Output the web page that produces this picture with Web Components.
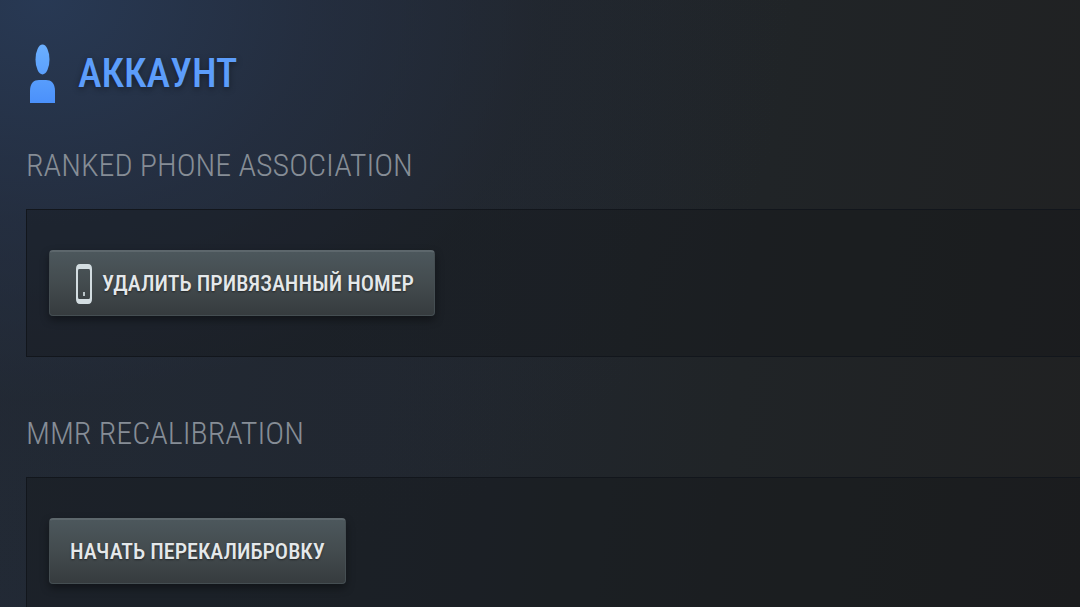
<!DOCTYPE html>
<html lang="ru">
<head>
<meta charset="UTF-8">
<meta name="viewport" content="width=device-width, initial-scale=1.0">
<title>Аккаунт</title>
<style>
    body {
        margin: 0;
        background: #202325;
        color: #e4e8ea;
        font-family: "Roboto Condensed", "Liberation Sans Narrow", Roboto, sans-serif;
    }
</style>
</head>
<body>
<settings-page>
    <page-heading slot="heading">АККАУНТ</page-heading>
    <settings-section>
        <span slot="title">RANKED PHONE ASSOCIATION</span>
        <panel-button icon="phone">УДАЛИТЬ ПРИВЯЗАННЫЙ НОМЕР</panel-button>
    </settings-section>
    <settings-section>
        <span slot="title">MMR RECALIBRATION</span>
        <panel-button>НАЧАТЬ ПЕРЕКАЛИБРОВКУ</panel-button>
    </settings-section>
</settings-page>

<script>
class SettingsPage extends HTMLElement {
    constructor() {
        super();
        this.attachShadow({ mode: 'open' });
    }

    connectedCallback() {
        // The pane scrolls by itself, the background stays in place
        this.shadowRoot.innerHTML = `
            <style>
                :host {
                    display: block;
                    box-sizing: border-box;
                    height: 100vh;
                    overflow-y: auto;
                    scrollbar-width: none;
                    padding: 44px 0 40px 26px;
                    background:
                        radial-gradient(ellipse 70% 100% at 4% 0%, #283954 0%, rgba(37,48,68,0.7) 36%, rgba(34,40,50,0.4) 66%, rgba(32,35,37,0) 100%),
                        linear-gradient(98deg, #222a36 0%, #212730 38%, #202427 68%, #202122 100%);
                }

                main {
                    display: flex;
                    flex-direction: column;
                    gap: 52px;
                    margin-top: 37px;
                }
            </style>
            <slot name="heading"></slot>
            <main><slot></slot></main>
        `;
    }
}

class PageHeading extends HTMLElement {
    constructor() {
        super();
        this.attachShadow({ mode: 'open' });
    }

    connectedCallback() {
        this.shadowRoot.innerHTML = `
            <style>
                :host {
                    display: flex;
                    align-items: center;
                    gap: 20px;
                    height: 60px;
                    color: #5c9dfb;
                }

                svg {
                    width: 32px;
                    height: 60px;
                }

                h1 {
                    margin: 0;
                    font-size: 40px;
                    line-height: 48px;
                    font-weight: 500;
                    text-shadow: 0 2px 6px rgba(0,0,0,0.4);
                }
            </style>
            <svg viewBox="0 0 32 60" aria-hidden="true">
                <defs>
                    <linearGradient id="fill" gradientUnits="userSpaceOnUse" x1="0" y1="0" x2="0" y2="60">
                        <stop offset="0" stop-color="#6cb0ff"/>
                        <stop offset="1" stop-color="#4a90fb"/>
                    </linearGradient>
                </defs>
                <ellipse cx="16.5" cy="15.5" rx="7" ry="15" fill="url(#fill)"/>
                <path d="M4 59V47C4 39 8 36 13 36H20C25 36 29 39 29 47V59Z" fill="url(#fill)"/>
            </svg>
            <h1><slot></slot></h1>
        `;
    }
}

class SettingsSection extends HTMLElement {
    constructor() {
        super();
        this.attachShadow({ mode: 'open' });
    }

    connectedCallback() {
        this.shadowRoot.innerHTML = `
            <style>
                :host {
                    display: block;
                }

                h2 {
                    margin: 0 0 20px;
                    font-size: 32px;
                    line-height: 48px;
                    font-weight: 300;
                    color: #868d96;
                }

                .panel {
                    display: flex;
                    padding: 40px 22px;
                    border: 1px solid #12161c;
                    border-right: 0;
                    background: rgba(20,22,26,0.4);
                }
            </style>
            <h2><slot name="title"></slot></h2>
            <div class="panel"><slot></slot></div>
        `;
    }
}

class PanelButton extends HTMLElement {
    constructor() {
        super();
        this.attachShadow({ mode: 'open' });
    }

    connectedCallback() {
        this.shadowRoot.innerHTML = `
            <style>
                :host {
                    display: block;
                }

                button {
                    display: flex;
                    align-items: center;
                    gap: 10px;
                    box-sizing: border-box;
                    height: 66px;
                    padding: 0 20px;
                    border: 1px solid #454e52;
                    border-top: 2px solid #5d676c;
                    border-radius: 4px;
                    background: linear-gradient(#4c575c, #434b4e 50%, #363b3e);
                    box-shadow: 0 4px 8px rgba(0,0,0,0.4);
                    color: #e4e8ea;
                    font-family: inherit;
                    font-size: 22px;
                    line-height: 32px;
                    font-weight: 500;
                    text-shadow: 0 1px 2px rgba(0,0,0,0.5);
                    white-space: nowrap;
                    cursor: pointer;
                }

                svg {
                    width: 16px;
                    height: 40px;
                    margin-left: 6px;
                }
            </style>
            <button type="button">${this.getIcon()}<span><slot></slot></span></button>
        `;
    }

    getIcon() {
        if (this.getAttribute('icon') !== 'phone') return '';
        return `
            <svg viewBox="0 0 16 40" aria-hidden="true">
                <path fill="#d3dde1" fill-rule="evenodd" d="M4 0H12Q16 0 16 5V35Q16 40 12 40H4Q0 40 0 35V5Q0 0 4 0ZM3 5Q2 5 2 7V33Q2 35 3 35H13Q14 35 14 33V7Q14 5 13 5Z"/>
                <rect x="7" y="28" width="2" height="4" fill="#b9c3c7"/>
            </svg>
        `;
    }
}

customElements.define('settings-page', SettingsPage);
customElements.define('page-heading', PageHeading);
customElements.define('settings-section', SettingsSection);
customElements.define('panel-button', PanelButton);
</script>
</body>
</html>
